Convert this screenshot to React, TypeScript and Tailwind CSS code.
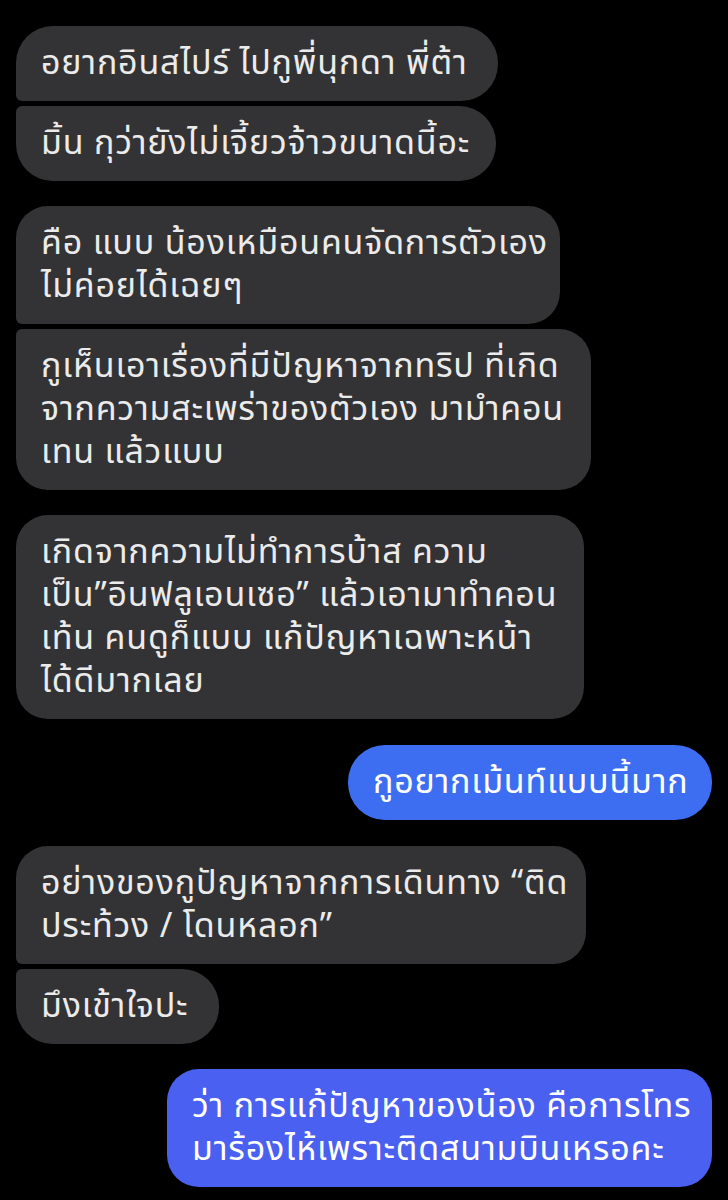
import React from "react";

type Msg = {
  lines: string[];
  side: "left" | "right";
  w: string;
  radius: string;
  color?: string;
  mt: string;
};

const msgs: Msg[] = [
  { lines: ["อยากอินสไปร์ ไปกูพี่นุกดา พี่ต้า"], side: "left", w: "w-[482px]", radius: "rounded-tl-[37px] rounded-tr-[37px] rounded-br-[37px] rounded-bl-[6px]", mt: "mt-[26px]" },
  { lines: ["มิ้น กุว่ายังไม่เจี้ยวจ้าวขนาดนี้อะ"], side: "left", w: "w-[480px]", radius: "rounded-tl-[6px] rounded-tr-[37px] rounded-br-[37px] rounded-bl-[37px]", mt: "mt-[5px]" },
  { lines: ["คือ แบบ น้องเหมือนคนจัดการตัวเอง", "ไม่ค่อยได้เฉยๆ"], side: "left", w: "w-[544px]", radius: "rounded-tl-[32px] rounded-tr-[32px] rounded-br-[32px] rounded-bl-[6px]", mt: "mt-[25px]" },
  { lines: ["กูเห็นเอาเรื่องที่มีปัญหาจากทริป ที่เกิด", "จากความสะเพร่าของตัวเอง มามำคอน", "เทน แล้วแบบ"], side: "left", w: "w-[575px]", radius: "rounded-tl-[6px] rounded-tr-[32px] rounded-br-[32px] rounded-bl-[32px]", mt: "mt-[5px]" },
  { lines: ["เกิดจากความไม่ทำการบ้าส ความ", "เป็น”อินฟลูเอนเซอ” แล้วเอามาทำคอน", "เท้น คนดูก็แบบ แก้ปัญหาเฉพาะหน้า", "ได้ดีมากเลย"], side: "left", w: "w-[568px]", radius: "rounded-[32px]", mt: "mt-[25px]" },
  { lines: ["กูอยากเม้นท์แบบนี้มาก"], side: "right", w: "w-[364px]", radius: "rounded-[37px]", color: "bg-[#3d6ef2]", mt: "mt-[26px]" },
  { lines: ["อย่างของกูปัญหาจากการเดินทาง “ติด", "ประท้วง / โดนหลอก”"], side: "left", w: "w-[570px]", radius: "rounded-tl-[32px] rounded-tr-[32px] rounded-br-[32px] rounded-bl-[6px]", mt: "mt-[26px]" },
  { lines: ["มึงเข้าใจปะ"], side: "left", w: "w-[203px]", radius: "rounded-tl-[6px] rounded-tr-[37px] rounded-br-[37px] rounded-bl-[37px]", mt: "mt-[5px]" },
  { lines: ["ว่า การแก้ปัญหาของน้อง คือการโทร", "มาร้องไห้เพราะติดสนามบินเหรอคะ"], side: "right", w: "w-[545px]", radius: "rounded-[32px]", color: "bg-[#4a60f0]", mt: "mt-[25px]" },
];

export default function App() {
  return (
    <div
      className="w-[728px] h-[1200px] bg-black overflow-hidden flex flex-col px-[16px]"
      style={{ fontFamily: '"Noto Sans Thai", "Noto Sans", "DejaVu Sans", sans-serif' }}
    >
      {msgs.map((m, i) => (
        <div
          key={i}
          className={`${m.mt} flex ${m.side === "right" ? "justify-end" : "justify-start"}`}
        >
          <p
            className={`${m.w} ${m.radius} ${m.side === "right" ? (m.color ?? "") + " text-white" : "bg-[#333335] text-[#ebebeb]"} px-[25px] py-[16px] text-[34px] leading-[43px] tracking-[0.8px] whitespace-nowrap overflow-hidden`}
          >
            {m.lines.map((l, j) => (
              <React.Fragment key={j}>
                {j > 0 && <br />}
                {l}
              </React.Fragment>
            ))}
          </p>
        </div>
      ))}
    </div>
  );
}
